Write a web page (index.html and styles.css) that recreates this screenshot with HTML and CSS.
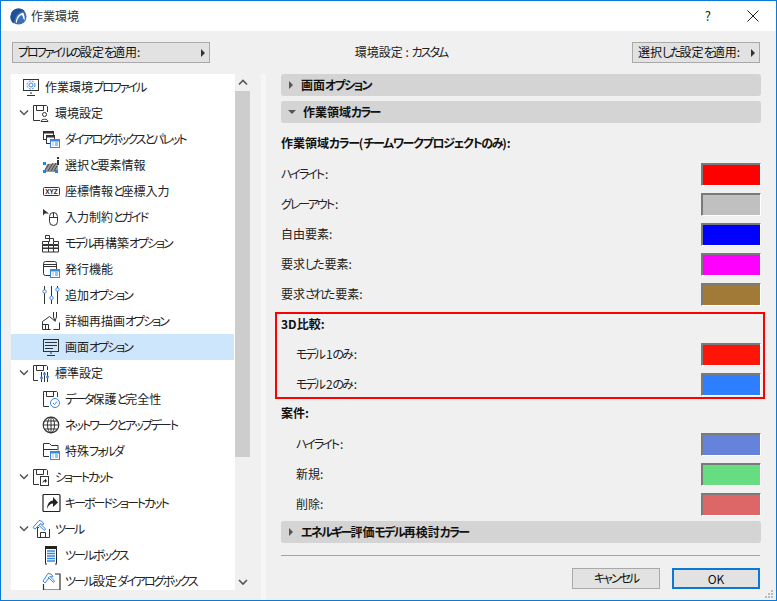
FILE: index.html
```html
<!DOCTYPE html>
<html lang="ja">
<head>
<meta charset="utf-8">
<title>作業環境</title>
<link rel="stylesheet" href="styles.css">
</head>
<body>
<div class="window">
  <header class="titlebar">
    <svg class="applogo" width="17" height="17" viewBox="0 0 18 18"><circle cx="9" cy="9" r="8.500" fill="#3d6fb4"/><path d="M.5 9a8.500 8.500 0 0 1 8.500-8.500c3 0 5 1 6.500 3C12 3 7 5 5 12c-.5 2-1 3-1 4.500A8.500 8.500 0 0 1 .5 9z" fill="#1f4f96"/><path d="M6 15C7 9 10 5.500 14 5c1 2 2 5 1.500 8L14 11c-.5-2-1-3-1.500-3.500C10 8 8 11 7 16z" fill="#fff"/></svg>
    <span class="apptitle">作業環境</span>
    <span class="help">?</span>
    <svg class="close" width="12" height="12" viewBox="0 0 12 12"><path d="M.5.500l11 11M11.500.500l-11 11" stroke="#222" fill="none"/></svg>
  </header>

  <div class="toolbar">
    <button class="menubtn wide"><span><span class="k">プロファイルの</span>設定<span class="k">を</span>適用:</span><i class="arrow-r"></i></button>
    <span class="status">環境設定 : <span class="k">カスタム</span></span>
    <button class="menubtn right"><span>選択<span class="k">した</span>設定<span class="k">を</span>適用:</span><i class="arrow-r"></i></button>
  </div>

  <div class="main">
    <nav class="tree">
      <div class="list">
        <div class="row l0"><svg class="ico" viewBox="0 0 20 20"><rect x="1.500" y="2.500" width="15" height="11" fill="none" stroke="#333"/><path d="M9 15v2M5 18.500h8" stroke="#333" fill="none"/><circle cx="9" cy="8" r="2" fill="none" stroke="#3a86e0"/><circle cx="9" cy="8" r="4" fill="none" stroke="#3a86e0" stroke-dasharray="2 1.200"/></svg><span>作業環境<span class="k">プロファイル</span></span></div>

        <div class="row l1"><svg class="chev" viewBox="0 0 14 8"><path d="M2 1.500l4 4 4-4" fill="none" stroke="#555" stroke-width="1.500"/></svg><svg class="ico" viewBox="0 0 20 20"><path d="M8 17.500H1.500v-15h13l1 1V9" fill="none" stroke="#333"/><path d="M4.500 3v4.500h7V3" fill="none" stroke="#333"/><circle cx="12.500" cy="11.500" r="2" fill="none" stroke="#333"/><path d="M9 18.500c0-3 7-3 7 0z" fill="none" stroke="#333"/></svg><span>環境設定</span></div>

        <div class="row l2"><svg class="ico" viewBox="0 0 20 20"><rect x="1.500" y="2.500" width="10" height="8" fill="none" stroke="#333"/><path d="M1 3.500h11" stroke="#333" stroke-width="2"/><rect x="4.500" y="6.500" width="8" height="8" fill="#fff" stroke="#333"/><path d="M4 7.500h9" stroke="#333" stroke-width="2"/><rect x="8.500" y="10.500" width="9" height="8" fill="#fff" stroke="#3a86e0"/><path d="M8 11.500h10" stroke="#3a86e0" stroke-width="2"/><path d="M10.500 14h1M13 14h3M10.500 16h1M13 16h3" stroke="#3a86e0"/></svg><span><span class="k">ダイアログボックスとパレット</span></span></div>

        <div class="row l2"><svg class="ico" viewBox="0 0 20 20"><path d="M2 17l3-8 11-1v9z" fill="#999"/><path d="M3 15l4-6M6 16l5-8M9 16l5-8M12 16l3-5" stroke="#444"/><path d="M1 7h3v3H1zM1 15h3v3H1zM13 15h3v3h-3z" fill="#2f7fe8"/><rect x="15" y="2" width="2" height="2" fill="#333"/><rect x="15" y="5" width="2" height="5" fill="#333"/></svg><span>選択<span class="k">と</span>要素情報</span></div>

        <div class="row l2"><svg class="ico" viewBox="0 0 20 20"><rect x="1.500" y="6.500" width="16" height="8" rx="1" fill="none" stroke="#333"/><text x="9.500" y="13" class="xyz" text-anchor="middle">XYZ</text></svg><span>座標情報<span class="k">と</span>座標入力</span></div>

        <div class="row l2"><svg class="ico" viewBox="0 0 20 20"><path d="M1 2v6.500l2-2h4z" fill="#333"/><rect x="7.500" y="5.500" width="8" height="13" rx="4" fill="none" stroke="#333"/><path d="M7.500 10.500h8M11.500 5.500v5" stroke="#333"/></svg><span>入力制約<span class="k">とガイド</span></span></div>

        <div class="row l2"><svg class="ico" viewBox="0 0 20 20"><path d="M3.500 2.500h4v3h-4zM.5 8.500h7v-3h-4M7.500 5.500h4v3M.5 8.500v3h6v-3M6.500 11.500h5v-3M11.500 8.500h5v3h-5M0 12.500h17M.5 12v3h6v-3M6.500 15h5v-3M11.500 15h5v-3M0 15.500h17M.5 16v3h16v-3M6.500 16v3M11.500 16v3" fill="none" stroke="#333"/></svg><span><span class="k">モデル</span>再構築<span class="k">オプション</span></span></div>

        <div class="row l2"><svg class="ico" viewBox="0 0 20 20"><path d="M8 16.500H3.500a2 2 0 0 1-2-2v-10a2 2 0 0 1 2-2h9a2 2 0 0 1 2 2V10" fill="none" stroke="#333"/><path d="M1.500 5.500h13M1.500 7.500h13" stroke="#333" fill="none"/><rect x="8.500" y="10.500" width="9" height="8" fill="#fff" stroke="#3a86e0"/><path d="M8 11.500h10" stroke="#3a86e0" stroke-width="2"/><path d="M10.500 14h1M13 14h3M10.500 16h1M13 16h3" stroke="#3a86e0"/></svg><span>発行機能</span></div>

        <div class="row l2"><svg class="ico" viewBox="0 0 20 20"><path d="M2.500 1v4M2.500 8v11M9.500 1v10M9.500 15v4M15.500 1v2M15.500 6v13" stroke="#333" fill="none"/><circle cx="2.500" cy="6.500" r="1.700" fill="none" stroke="#3a86e0"/><circle cx="9.500" cy="13" r="1.700" fill="none" stroke="#3a86e0"/><circle cx="15.500" cy="4.500" r="1.700" fill="none" stroke="#3a86e0"/></svg><span>追加<span class="k">オプション</span></span></div>

        <div class="row l2"><svg class="ico" viewBox="0 0 20 20"><path d="M.5 18.500v-8l7-5 6 5M.5 18.500h8M1 13.500h5.500v5M3.500 18v-4M11.500 18.500h6v-7" fill="none" stroke="#333"/><path d="M11.500 1v5l1.500 4 1.500-4V1" fill="none" stroke="#333"/></svg><span>詳細再描画<span class="k">オプション</span></span></div>

        <div class="row l2 selected"><svg class="ico" viewBox="0 0 20 20"><rect x="1.500" y="2.500" width="15" height="12" fill="none" stroke="#333"/><path d="M3 5.500h12M3 8.500h12M3 11.500h8M9 15v2M5 18.500h8" stroke="#333" fill="none"/></svg><span>画面<span class="k">オプション</span></span></div>

        <div class="row l1"><svg class="chev" viewBox="0 0 14 8"><path d="M2 1.500l4 4 4-4" fill="none" stroke="#555" stroke-width="1.500"/></svg><svg class="ico" viewBox="0 0 20 20"><path d="M6 17.500H1.500v-15h13l1 1V7" fill="none" stroke="#333"/><path d="M4.500 3v4.500h7V3" fill="none" stroke="#333"/><path d="M9.500 9v10M12.500 9v10M15.500 9v10" stroke="#333"/><circle cx="9.500" cy="15" r="1.400" fill="#3a86e0"/><circle cx="12.500" cy="11" r="1.400" fill="#3a86e0"/><circle cx="15.500" cy="14" r="1.400" fill="#3a86e0"/></svg><span>標準設定</span></div>

        <div class="row l2"><svg class="ico" viewBox="0 0 20 20"><path d="M7 17.500H1.500v-15h13l1 1V8" fill="none" stroke="#333"/><path d="M4.500 3v4.500h7V3" fill="none" stroke="#333"/><circle cx="13" cy="14" r="4.500" fill="#fff" stroke="#3a86e0"/><path d="M11 14l1.500 1.500 2.500-3" fill="none" stroke="#3a86e0"/></svg><span><span class="k">データ</span>保護<span class="k">と</span>完全性</span></div>

        <div class="row l2"><svg class="ico" viewBox="0 0 20 20"><circle cx="9" cy="10" r="7.800" fill="none" stroke="#333" stroke-width="1.200"/><ellipse cx="9" cy="10" rx="3.500" ry="7.800" fill="none" stroke="#333"/><path d="M9 2v16M1.500 10h15M2.500 6h13M2.500 14h13" stroke="#333" fill="none"/></svg><span><span class="k">ネットワークとアップデート</span></span></div>

        <div class="row l2"><svg class="ico" viewBox="0 0 20 20"><path d="M7 15.500H1.500v-13h6l2 2h6.500v5M1.500 8.500h14" fill="none" stroke="#333"/><rect x="8.500" y="10.500" width="9" height="8" fill="#fff" stroke="#3a86e0"/><path d="M8 11.500h10" stroke="#3a86e0" stroke-width="2"/><path d="M10.500 14h1M13 14h3M10.500 16h1M13 16h3" stroke="#3a86e0"/></svg><span>特殊<span class="k">フォルダ</span></span></div>

        <div class="row l1"><svg class="chev" viewBox="0 0 14 8"><path d="M2 1.500l4 4 4-4" fill="none" stroke="#555" stroke-width="1.500"/></svg><svg class="ico" viewBox="0 0 20 20"><path d="M7 17.500H1.500v-15h13l1 1V8" fill="none" stroke="#333"/><path d="M4.500 3v4.500h7V3" fill="none" stroke="#333"/><rect x="8.500" y="9.500" width="8" height="9" fill="#fff" stroke="#333"/><path d="M10.500 16.500c0-2 1-3.500 2.500-3.500v-1.500l2 2.500-2 2v-1.500c-1 0-2 .5-2.500 2z" fill="#222"/></svg><span><span class="k">ショートカット</span></span></div>

        <div class="row l2"><svg class="ico" viewBox="0 0 20 20"><rect x="1" y="1.500" width="17" height="17" rx="1" fill="none" stroke="#222" stroke-width="1.200"/><path d="M5 16c0-5 2.500-8 6-8.500V4l5 5.500-5 4.500v-3.500c-2.500 0-5 2-6 5.500z" fill="#222"/></svg><span><span class="k">キーボードショートカット</span></span></div>

        <div class="row l1"><svg class="chev" viewBox="0 0 14 8"><path d="M2 1.500l4 4 4-4" fill="none" stroke="#555" stroke-width="1.500"/></svg><svg class="ico" viewBox="0 0 20 20"><path d="M7 8.500H5.500v10h12v-8.500M8.500 18v-4.500h5V18" fill="none" stroke="#333"/><path d="M1 8.500l6-7 2.500.5 2.500 3-2 .5-1.500-1L3 10z" fill="#fff" stroke="#3a86e0"/><path d="M8.500 5l5 5-1 1.500-5.500-5" fill="#fff" stroke="#3a86e0"/></svg><span><span class="k">ツール</span></span></div>

        <div class="row l2"><svg class="ico" viewBox="0 0 20 20"><path d="M3.500 1.500h11M3.500 1.500v17M14.500 1.500v17" stroke="#222" fill="none"/><rect x="3" y="1" width="12" height="3" fill="#222"/><path d="M5 6h8M5 8.500h8M5 11h8M5 13.500h8M5 16h8" stroke="#3a86e0" stroke-width="1.300"/><path d="M3 19h2M13 19h2" stroke="#222"/></svg><span><span class="k">ツールボックス</span></span></div>

        <div class="row l2"><svg class="ico" viewBox="0 0 20 20"><path d="M1.500 13v6h16.500V3h-5" fill="none" stroke="#333" stroke-width="1.200"/><path d="M1 10l5-7.500 3 .5 2 2.500-2 .5-1-.5L3 12z" fill="#fff" stroke="#3a86e0"/><path d="M7.500 5l5 5-1 1.500-5.500-5.500" fill="#fff" stroke="#3a86e0"/></svg><span><span class="k">ツール</span>設定<span class="k">ダイアログボックス</span></span></div>
      </div>
      <div class="scrollbar">
        <svg class="sb-arrow" width="10" height="8" viewBox="0 0 10 8"><path d="M1 5.500l4-4 4 4" fill="none" stroke="#555" stroke-width="1.600"/></svg>
        <div class="thumbtrack"><div class="thumb"></div></div>
        <svg class="sb-arrow" width="10" height="8" viewBox="0 0 10 8"><path d="M1 2l4 4 4-4" fill="none" stroke="#555" stroke-width="1.600"/></svg>
      </div>
    </nav>

    <section class="panel">
      <div class="content">
        <div class="bar"><i class="tri-r"></i><span>画面<span class="kb">オプション</span></span></div>
        <div class="bar"><i class="tri-d"></i><span>作業領域<span class="kb">カラー</span></span></div>
        <div class="settings">
          <div class="row-s heading">作業領域<span class="kb">カラー</span>(<span class="kb">チームワークプロジェクトのみ</span>):</div>
          <div class="row-s"><span><span class="k">ハイライト</span>:</span><span class="swatch c-red"></span></div>
          <div class="row-s"><span><span class="k">グレーアウト</span>:</span><span class="swatch c-gray"></span></div>
          <div class="row-s"><span>自由要素:</span><span class="swatch c-blue"></span></div>
          <div class="row-s"><span>要求<span class="k">した</span>要素:</span><span class="swatch c-mag"></span></div>
          <div class="row-s"><span>要求<span class="k">された</span>要素:</span><span class="swatch c-brown"></span></div>
          <div class="redbox">
            <div class="row-s heading head3d">3D比較:</div>
            <div class="row-s indent"><span><span class="k">モデル</span>1<span class="k">のみ</span>:</span><span class="swatch c-m1"></span></div>
            <div class="row-s indent"><span><span class="k">モデル</span>2<span class="k">のみ</span>:</span><span class="swatch c-m2"></span></div>
          </div>
          <div class="row-s heading">案件:</div>
          <div class="row-s indent"><span><span class="k">ハイライト</span>:</span><span class="swatch c-hl"></span></div>
          <div class="row-s indent"><span>新規:</span><span class="swatch c-new"></span></div>
          <div class="row-s indent"><span>削除:</span><span class="swatch c-del"></span></div>
        </div>
        <div class="bar last"><i class="tri-r"></i><span><span class="kb">エネルギー</span>評価<span class="kb">モデル</span>再検討<span class="kb">カラー</span></span></div>
      </div>
      <footer class="footer">
        <button class="btn"><span class="k">キャンセル</span></button>
        <button class="btn ok">OK</button>
      </footer>
    </section>
  </div>
  <svg class="grip" width="10" height="10" viewBox="0 0 10 10"><path d="M7 1h2v2H7zM4 4h2v2H4zM7 4h2v2H7zM1 7h2v2H1zM4 7h2v2H4zM7 7h2v2H7z" fill="#bbb"/></svg>
</div>
</body>
</html>
```

FILE: styles.css
```css
* { box-sizing: border-box; }
html, body { margin: 0; padding: 0; }
body {
  width: 777px;
  height: 601px;
  overflow: hidden;
  font-family: "Noto Sans CJK JP", "Noto Sans", sans-serif;
  font-size: 12px;
  color: #1a1a1a;
  font-feature-settings: "palt";
}
.k { letter-spacing: -2px; }
.kb { letter-spacing: -1.300px; }
.bar .kb { letter-spacing: -1.700px; }
.row-s .k { margin-right: 2px; }
.window {
  position: relative;
  width: 777px;
  height: 601px;
  border: 1px solid #0a7ad6;
  background: #f0f0f0;
  display: flex;
  flex-direction: column;
}
.titlebar {
  height: 30px;
  background: #fff;
  display: flex;
  align-items: center;
  padding-left: 9px;
  flex: none;
}
.applogo { flex: none; }
.apptitle { margin-left: 4px; color: #333; padding-bottom: 2px; }
.help { margin-left: auto; margin-right: 36px; font-size: 13px; padding-bottom: 2px; }
.close { margin-right: 17px; margin-bottom: 1px; }

.toolbar {
  height: 43px;
  flex: none;
  display: flex;
  align-items: center;
  justify-content: space-between;
  padding: 0 16px 0 11px;
}
.menubtn {
  height: 21px;
  padding: 0 4px 2px 5px;
  display: flex;
  align-items: center;
  justify-content: space-between;
  border: 1px solid #a9a9a9;
  background: #e2e2e2;
  font: inherit;
  font-feature-settings: inherit;
  color: #111;
}
.menubtn.wide { width: 198px; }
.menubtn.right { width: 128px; }
.status { color: #222; margin-right: 40px; padding-bottom: 2px; }
.arrow-r {
  width: 0; height: 0;
  margin-top: 2px;
  border-left: 4px solid #333;
  border-top: 4px solid transparent;
  border-bottom: 4px solid transparent;
}

.main { flex: 1; display: flex; min-height: 0; }
.tree {
  display: flex;
  width: 250px;
  margin-left: 10px;
  height: 516px;
  flex: none;
}
.list { width: 224px; background: #fff; overflow: hidden; flex: none; }
.row {
  height: 26px;
  display: flex;
  align-items: center;
  color: #222;
  white-space: nowrap;
}
.row > span { padding-bottom: 2px; }
.row.l0 { padding-left: 11px; }
.row.l1 { padding-left: 7px; }
.row.l2 { padding-left: 31px; }
.row.selected { background: #cde6fb; margin-right: 1px; }
.ico { width: 20px; height: 20px; flex: none; margin-right: 3px; }
.chev { width: 14px; height: 8px; flex: none; }
.xyz { font-family: "Liberation Sans", sans-serif; font-size: 6.500px; font-weight: 700; fill: #222; }

.scrollbar {
  width: 15px;
  display: flex;
  flex-direction: column;
  align-items: center;
  flex: none;
}
.sb-arrow { flex: none; margin: 5px 0 4px; }
.thumbtrack { flex: 1; width: 100%; }
.thumb { width: 100%; height: 366px; background: #cdcdcd; }

.panel {
  flex: 1;
  min-width: 0;
  display: flex;
  flex-direction: column;
  border-left: 5px solid #f6f6f6;
  padding-left: 15px;
}
.content { display: flex; flex-direction: column; padding-right: 15px; }
.bar {
  height: 22px;
  background: #d4d4d4;
  border-radius: 3px;
  display: flex;
  align-items: center;
  font-weight: 700;
  color: #111;
  margin-bottom: 5px;
}
.bar > span { margin-left: 8px; padding-bottom: 2px; }
.tri-r {
  margin-left: 8px;
  width: 0; height: 0;
  border-left: 4px solid #555;
  border-top: 4px solid transparent;
  border-bottom: 4px solid transparent;
}
.tri-d {
  margin-left: 7px;
  width: 0; height: 0;
  border-top: 4px solid #555;
  border-left: 4px solid transparent;
  border-right: 4px solid transparent;
  margin-right: -1px;
}
.settings {
  display: flex;
  flex-direction: column;
  gap: 8px;
  padding: 5px 0 6px 0;
}
.row-s {
  height: 22px;
  display: flex;
  align-items: center;
  justify-content: space-between;
  color: #222;
}
.row-s > span:first-child { padding-bottom: 2px; }
.heading { display: block; font-weight: 700; color: #111; line-height: 20px; }
.indent { padding-left: 15px; }
.swatch {
  width: 60px;
  height: 23px;
  align-self: flex-start;
  margin-bottom: -1px;
  border: 1px solid;
  border-color: #7a7a7a #fff #fff #7a7a7a;
  box-shadow: inset 1px 1px 0 #7a7a7a;
}
.c-red { background: #ff0000; }
.c-gray { background: #c0c0c0; }
.c-blue { background: #0000ff; }
.c-mag { background: #ff00ff; }
.c-brown { background: #a07a36; }
.c-m1 { background: #ff1408; }
.c-m2 { background: #2e7fff; }
.c-hl { background: #6683dc; }
.c-new { background: #66dd80; }
.c-del { background: #dd6666; }
.redbox {
  display: flex;
  flex-direction: column;
  gap: 8px;
  margin: -1px -4px -4px -6px;
  padding: 0 2px 2px 4px;
  border: 2px solid #ff0000;
}
.head3d { margin-bottom: -1px; }
.bar.last { margin-bottom: 0; }
.footer {
  margin: 12px 16px 0 0;
  border-top: 1px solid #a3a3a3;
  padding-top: 12px;
  display: flex;
  justify-content: flex-end;
  gap: 12px;
}
.btn {
  width: 88px;
  height: 21px;
  border: 1px solid #a9a9a9;
  background: #e2e2e2;
  font: inherit;
  font-feature-settings: inherit;
  color: #111;
  padding: 0 0 2px;
}
.btn.ok { border: 2px solid #0a78d4; }
.grip { position: absolute; right: 2px; bottom: 1px; }
```
